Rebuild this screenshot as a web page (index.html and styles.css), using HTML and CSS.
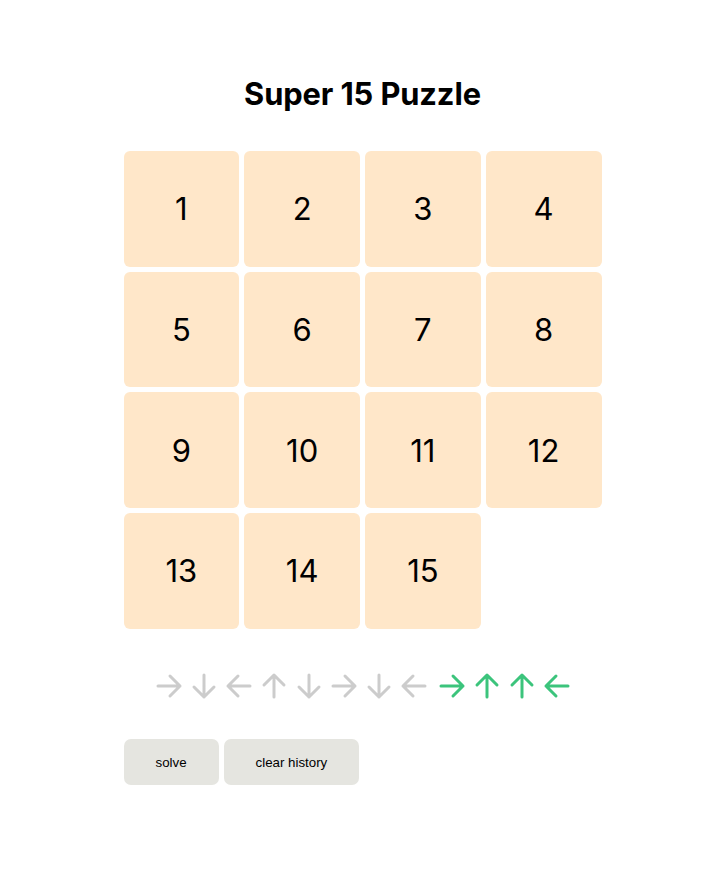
FILE: index.html
```html
<!DOCTYPE html>
<html>
<head>
<meta charset="utf-8">
<title>Super 15 Puzzle</title>
<link rel="stylesheet" href="styles.css">
</head>
<body>
<main class="app">
  <h1 class="title">Super 15 Puzzle</h1>
  <div class="board">
    <div class="tile">1</div>
    <div class="tile">2</div>
    <div class="tile">3</div>
    <div class="tile">4</div>
    <div class="tile">5</div>
    <div class="tile">6</div>
    <div class="tile">7</div>
    <div class="tile">8</div>
    <div class="tile">9</div>
    <div class="tile">10</div>
    <div class="tile">11</div>
    <div class="tile">12</div>
    <div class="tile">13</div>
    <div class="tile">14</div>
    <div class="tile">15</div>
    <div class="tile tile-empty"></div>
  </div>
  <div class="history">
    <svg class="arrow past" viewBox="0 0 28 28"><path d="M3 14H25M15 4L25 14L15 24"/></svg>
    <svg class="arrow past rot-down" viewBox="0 0 28 28"><path d="M3 14H25M15 4L25 14L15 24"/></svg>
    <svg class="arrow past rot-left" viewBox="0 0 28 28"><path d="M3 14H25M15 4L25 14L15 24"/></svg>
    <svg class="arrow past rot-up" viewBox="0 0 28 28"><path d="M3 14H25M15 4L25 14L15 24"/></svg>
    <svg class="arrow past rot-down" viewBox="0 0 28 28"><path d="M3 14H25M15 4L25 14L15 24"/></svg>
    <svg class="arrow past" viewBox="0 0 28 28"><path d="M3 14H25M15 4L25 14L15 24"/></svg>
    <svg class="arrow past rot-down" viewBox="0 0 28 28"><path d="M3 14H25M15 4L25 14L15 24"/></svg>
    <svg class="arrow past rot-left" viewBox="0 0 28 28"><path d="M3 14H25M15 4L25 14L15 24"/></svg>
    <svg class="arrow next first-next" viewBox="0 0 28 28"><path d="M3 14H25M15 4L25 14L15 24"/></svg>
    <svg class="arrow next rot-up" viewBox="0 0 28 28"><path d="M3 14H25M15 4L25 14L15 24"/></svg>
    <svg class="arrow next rot-up" viewBox="0 0 28 28"><path d="M3 14H25M15 4L25 14L15 24"/></svg>
    <svg class="arrow next rot-left" viewBox="0 0 28 28"><path d="M3 14H25M15 4L25 14L15 24"/></svg>
  </div>
  <div class="actions">
    <button class="btn">solve</button>
    <button class="btn">clear history</button>
  </div>
</main>
</body>
</html>
```
FILE: styles.css
```css
html, body {
  margin: 0;
  padding: 0;
  background: #ffffff;
}

body {
  font-family: Inter, "Liberation Sans", sans-serif;
  color: #000;
}

.app {
  width: 478px;
  margin: 0 auto;
  padding-top: 74px;
}

.title {
  margin: 0;
  font-size: 30.8px;
  font-weight: 700;
  line-height: 40px;
  text-align: center;
  letter-spacing: -0.1px;
}

.board {
  margin-top: 37px;
  display: grid;
  grid-template-columns: repeat(4, 1fr);
  grid-auto-rows: 115.7px;
  gap: 5px;
}

.tile {
  background: #ffe7c9;
  border-radius: 6px;
  display: flex;
  align-items: center;
  justify-content: center;
  font-size: 31px;
  font-weight: 400;
}

.tile-empty {
  background: transparent;
}

.history {
  margin-top: 43px;
  display: flex;
  justify-content: center;
  gap: 7px;
}

.arrow {
  width: 28px;
  height: 28px;
  fill: none;
  stroke-width: 3;
  stroke-linecap: round;
  stroke-linejoin: round;
}

.past { stroke: #cccccc; }
.next { stroke: #3cc47c; }

.first-next { margin-left: 3px; }

.rot-down { transform: rotate(90deg); }
.rot-left { transform: rotate(180deg); }
.rot-up { transform: rotate(-90deg); }

.actions {
  margin-top: 39px;
  display: flex;
  gap: 5px;
}

.btn {
  height: 46.5px;
  padding: 0 32px;
  border: none;
  border-radius: 7px;
  background: #e5e5e0;
  font-family: "Liberation Sans", Arial, sans-serif;
  font-size: 13.3px;
  color: #000;
}
```
